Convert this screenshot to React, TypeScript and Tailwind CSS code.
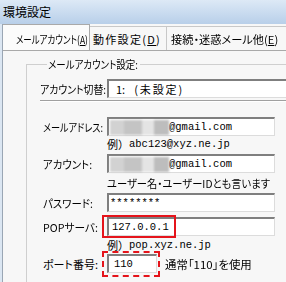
import React from "react";

const jp = "font-['Noto_Sans_CJK_JP',sans-serif] [font-feature-settings:'palt']";
const mono = "font-['Liberation_Mono','Noto_Sans_CJK_JP',monospace]";
const sunken =
  "h-[19px] bg-white border-t-2 border-l-2 border-t-[#7f7f7f] border-l-[#7f7f7f] border-r border-b border-r-[#dcdcdc] border-b-[#dcdcdc] flex items-center";

function Blur() {
  return (
    <div className="flex h-[15px] w-[59px] blur-[1.2px]">
      <div className="w-[14px] bg-[#d2d2d2]" />
      <div className="w-[18px] bg-[#c4c4c4]" />
      <div className="w-[12px] bg-[#e4e4e4]" />
      <div className="w-[15px] bg-[#bdbdbd]" />
    </div>
  );
}

function Label({ children, className = "" }: { children: React.ReactNode; className?: string }) {
  return (
    <div className="w-[64px] shrink-0 whitespace-nowrap">
      <span className={`inline-block [transform-origin:left_center] ${className}`}>{children}</span>
    </div>
  );
}

export default function App() {
  return (
    <div className={`w-[286px] h-[282px] overflow-hidden bg-[#f0f0f0] text-[11px] leading-[12px] text-black ${jp}`}>
      {/* title bar */}
      <div className="h-[24px] bg-gradient-to-b from-[#dde9f6] to-[#b8cfe9] flex items-center pl-[3px] text-[12px]">
        <span>環境設定</span>
      </div>
      <div className="flex h-[258px]">
        {/* window frame left */}
        <div className="w-[3px] shrink-0 bg-[#dbe6f2] border-r border-r-[#9aa6b4]" />
        <div className="flex-1 flex flex-col bg-[#f7f7f7]">
          {/* tabs */}
          <div className="h-[30px] flex items-end">
            <div className="h-[26px] w-[87px] shrink-0 border-t border-r border-[#a9a9a9] bg-[#fbfbfb] flex items-center pl-[13px] pt-[3px] whitespace-nowrap">
              <span className="inline-block [transform-origin:left_center] [transform:scaleX(0.77)]">
                メールアカウント(<span className="underline">A</span>)
              </span>
            </div>
            <div className="h-[24px] w-[77px] shrink-0 border-t border-r border-[#c8c8c8] flex items-center pl-[3px] pt-[1px] whitespace-nowrap">
              <span className="tracking-[1.3px]">
                動作設定(<span className="underline">D</span>)
              </span>
            </div>
            <div className="h-[24px] flex-1 border-t border-[#c8c8c8] flex items-center pl-[4px] pt-[1px] whitespace-nowrap">
              <span className="inline-block [transform-origin:left_center] [transform:scaleX(1.02)]">
                接続・迷惑メール他(<span className="underline">E</span>)
              </span>
            </div>
          </div>
          {/* panel */}
          <div className="flex-1 border-t border-[#a9a9a9] bg-[#f7f7f7] pl-[23px] pt-[7px]">
            <fieldset className="border-t border-l border-t-[#cfcfcf] border-l-[#cfcfcf] h-[240px] w-[300px] pl-[16px]">
              <legend className="ml-[4px] w-[93px] px-[1px] leading-[12px] whitespace-nowrap">
                <span className="inline-block [transform-origin:left_center] [transform:scaleX(0.862)]">
                  メールアカウント設定:
                </span>
              </legend>
              {/* account switch */}
              <div className="mt-[9px] flex items-center ml-[-3px]">
                <div className="w-[67px] shrink-0 whitespace-nowrap">
                  <span className="inline-block [transform-origin:left_center] [transform:scaleX(0.897)]">
                    アカウント切替:
                  </span>
                </div>
                <div className={`${sunken} w-[200px] pl-[7px] whitespace-nowrap`}>
                  <span>1:</span>
                  <span className="ml-[9px] tracking-[1.9px]">(未設定)</span>
                </div>
              </div>
              {/* separator */}
              <div className="mt-[2px] ml-[-3px] h-[2px] border-t border-b border-t-[#a0a0a0] border-b-white" />
              {/* mail address */}
              <div className="mt-[15px] flex items-center">
                <Label className="[transform:scaleX(0.83)]">メールアドレス:</Label>
                <div className={`${sunken} w-[168px] pl-[1px] ${mono} text-[10.5px]`}>
                  <Blur />
                  <span>@gmail.com</span>
                </div>
              </div>
              <div className="mt-[2px] pl-[64px] h-[12px] flex items-center text-[10.5px] whitespace-nowrap">
                <span className="text-[11px] [font-feature-settings:normal]">例）</span>
                <span className={mono}>abc123@xyz.ne.jp</span>
              </div>
              {/* account */}
              <div className="mt-[4px] flex items-center">
                <Label className="[transform:scaleX(0.95)]">アカウント:</Label>
                <div className={`${sunken} w-[168px] pl-[1px] ${mono} text-[10.5px]`}>
                  <Blur />
                  <span>@gmail.com</span>
                </div>
              </div>
              <div className="mt-[3px] pl-[64px] h-[13px] flex items-center whitespace-nowrap">
                <span className="inline-block [transform-origin:left_center] [transform:scaleX(0.935)]">
                  ユーザー名・ユーザーIDとも言います
                </span>
              </div>
              {/* password */}
              <div className="mt-[4px] flex items-center">
                <Label className="[transform:scaleX(0.95)]">パスワード:</Label>
                <div className={`${sunken} w-[168px] pl-[1px] ${mono} text-[10.5px]`}>********</div>
              </div>
              {/* POP */}
              <div className="mt-[5px] flex items-center relative">
                <Label className="[transform:scaleX(0.97)]">POPサーバ:</Label>
                <div className={`${sunken} w-[168px] pl-[3px] ${mono} text-[10.5px]`}>127.0.0.1</div>
                <div className="absolute left-[59px] top-[-2px] w-[74px] h-[23px] border-2 border-[#e5141b]" />
              </div>
              <div className="mt-[3px] pl-[64px] h-[12px] flex items-center text-[10.5px] whitespace-nowrap">
                <span className="text-[11px] [font-feature-settings:normal]">例）</span>
                <span className={mono}>pop.xyz.ne.jp</span>
              </div>
              {/* port */}
              <div className="mt-[3px] flex items-center relative">
                <Label>ポート番号:</Label>
                <div className={`${sunken} w-[50px] pl-[5px] ${mono} text-[10.5px]`}>110</div>
                <span className="ml-[8px] whitespace-nowrap inline-block [transform-origin:left_center] [transform:scaleX(1.04)]">
                  通常「110」を使用
                </span>
                <div className="absolute left-[59px] top-[-3px] w-[58px] h-[26px] border-2 border-dashed border-[#e5141b]" />
              </div>
            </fieldset>
          </div>
        </div>
      </div>
    </div>
  );
}
